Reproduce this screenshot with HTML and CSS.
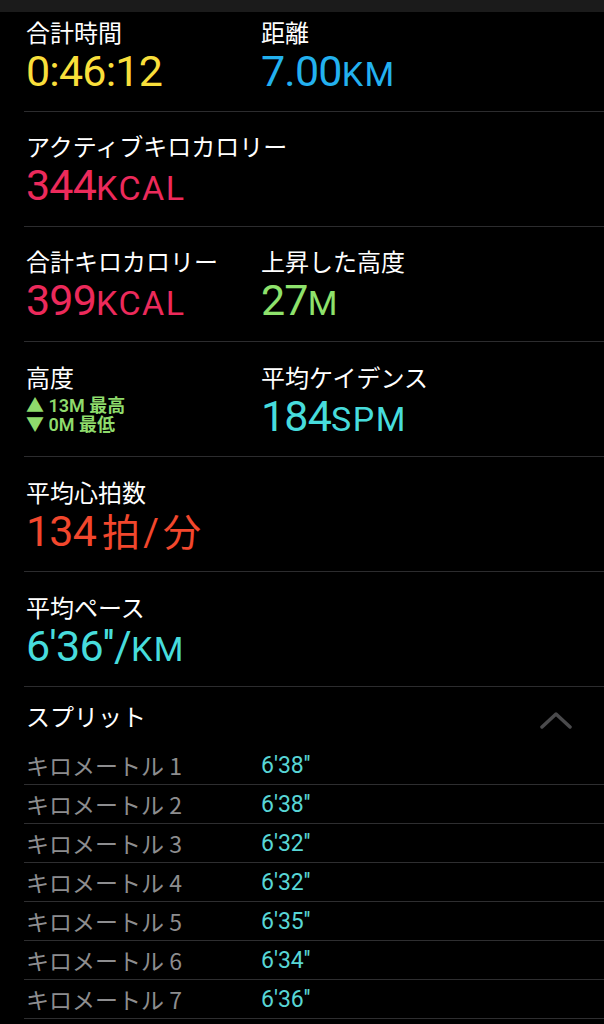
FILE: index.html
```html
<!DOCTYPE html>
<html lang="ja">
<head>
  <meta charset="UTF-8" />
  <meta name="viewport" content="width=device-width, initial-scale=1.0" />
  <title>ワークアウト</title>
  <link rel="stylesheet" href="styles.css">
</head>
<body>
  <div class="topbar"></div>

  <div class="stats">
    <div class="stat-row first">
      <div class="stat">
        <div class="label">合計時間</div>
        <div class="value yellow">0:46:12</div>
      </div>
      <div class="stat">
        <div class="label">距離</div>
        <div class="value blue">7.00<span class="unit">KM</span></div>
      </div>
    </div>

    <div class="stat-row">
      <div class="stat wide">
        <div class="label">アクティブキロカロリー</div>
        <div class="value pink">344<span class="unit">KCAL</span></div>
      </div>
    </div>

    <div class="stat-row">
      <div class="stat">
        <div class="label">合計キロカロリー</div>
        <div class="value pink">399<span class="unit">KCAL</span></div>
      </div>
      <div class="stat">
        <div class="label">上昇した高度</div>
        <div class="value green">27<span class="unit">M</span></div>
      </div>
    </div>

    <div class="stat-row">
      <div class="stat">
        <div class="label">高度</div>
        <div class="elevation">
          <div>▲ 13M 最高</div>
          <div>▼ 0M 最低</div>
        </div>
      </div>
      <div class="stat">
        <div class="label">平均ケイデンス</div>
        <div class="value cyan">184<span class="unit">SPM</span></div>
      </div>
    </div>

    <div class="stat-row">
      <div class="stat wide">
        <div class="label">平均心拍数</div>
        <div class="value red">134<span class="kanji first-kanji">拍</span><span class="slash">/</span><span class="kanji">分</span></div>
      </div>
    </div>

    <div class="stat-row">
      <div class="stat wide">
        <div class="label">平均ペース</div>
        <div class="value cyan">6'36''/<span class="unit">KM</span></div>
      </div>
    </div>
  </div>

  <div class="splits">
    <div class="splits-head">
      <span class="label">スプリット</span>
      <svg class="chevron" width="32" height="18" viewBox="0 0 32 18">
        <polyline points="2,16 16,3 30,16" fill="none" stroke="#4a4a4c" stroke-width="3.5" stroke-linecap="round" stroke-linejoin="round" />
      </svg>
    </div>
    <div class="split"><span class="split-name">キロメートル 1</span><span class="split-time">6'38''</span></div>
    <div class="split"><span class="split-name">キロメートル 2</span><span class="split-time">6'38''</span></div>
    <div class="split"><span class="split-name">キロメートル 3</span><span class="split-time">6'32''</span></div>
    <div class="split"><span class="split-name">キロメートル 4</span><span class="split-time">6'32''</span></div>
    <div class="split"><span class="split-name">キロメートル 5</span><span class="split-time">6'35''</span></div>
    <div class="split"><span class="split-name">キロメートル 6</span><span class="split-time">6'34''</span></div>
    <div class="split"><span class="split-name">キロメートル 7</span><span class="split-time">6'36''</span></div>
  </div>
</body>
</html>
```

FILE: styles.css
```css
body {
  margin: 0;
  background: #000;
  color: #fff;
  font-family: "Noto Sans CJK JP", "Noto Sans", sans-serif;
  height: 1024px;
  overflow: hidden;
}

.topbar {
  height: 12px;
  background: #1b1b1b;
}

.stats {
  margin-left: 24px;
}

.stat-row {
  display: grid;
  grid-template-columns: 235px 1fr;
  height: 78px;
  padding: 20px 0 16px 2px;
  border-bottom: 1px solid #2c2c2e;
}

.stat-row.first {
  padding-top: 5px;
}

.stat-row:nth-child(2),
.stat-row:nth-child(3) {
  padding-top: 19px;
  padding-bottom: 17px;
}

.stat.wide {
  grid-column: 1 / 3;
}

.label {
  font-size: 24px;
  line-height: 30px;
  height: 30px;
  color: #fff;
  white-space: nowrap;
}

.value {
  font-family: "Roboto", "Noto Sans", sans-serif;
  font-size: 43px;
  line-height: 48px;
  height: 48px;
  letter-spacing: -0.8px;
  white-space: nowrap;
}

.value span {
  line-height: 1;
}

.value .unit {
  font-size: 34px;
  font-weight: 400;
  letter-spacing: 1.5px;
}

.value .kanji {
  font-family: "Noto Sans CJK JP", sans-serif;
  font-size: 38px;
  letter-spacing: 0;
}

.value .first-kanji {
  margin-left: 6px;
}

.value .slash {
  font-size: 38px;
  margin: 0 5px 0 3px;
}

.yellow { color: #f9df3b; }
.blue { color: #23b1ef; }
.pink { color: #ec2a5b; }
.green { color: #8ee26c; }
.cyan { color: #47dcdc; }
.red { color: #f2472d; }

.elevation {
  margin-top: 4px;
  font-family: "Roboto", "Noto Sans CJK JP", sans-serif;
  font-size: 18px;
  line-height: 19px;
  font-weight: 600;
  color: #8fdb6c;
}

.splits {
  margin-left: 24px;
}

.splits-head {
  display: flex;
  justify-content: space-between;
  align-items: center;
  height: 30px;
  padding: 14px 32px 15px 2px;
}

.chevron {
  margin-top: 8px;
}

.split {
  display: flex;
  align-items: center;
  height: 38px;
  padding-left: 2px;
  border-bottom: 1px solid #2e2e30;
  font-size: 23px;
}

.split-name {
  width: 235px;
  color: #8d8d8f;
}

.split-time {
  font-family: "Roboto", "Noto Sans", sans-serif;
  color: #58d6d6;
}
```
